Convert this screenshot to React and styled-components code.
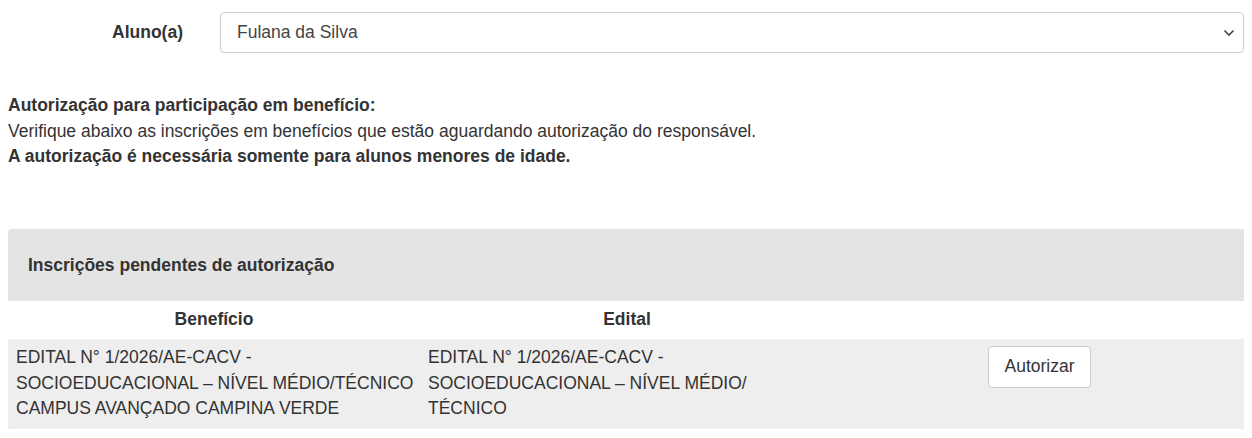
import styled, { createGlobalStyle } from "styled-components";

const GlobalStyle = createGlobalStyle`
  body {
    margin: 8px;
    background: #fff;
    color: #333;
    font-family: "Liberation Sans", Arial, sans-serif;
    font-size: 17.5px;
    line-height: 25.6px;
  }
`;

const FieldRow = styled.div`
  display: grid;
  grid-template-columns: 175px 1fr;
  column-gap: 37px;
  align-items: center;
  padding-top: 4px;
`;

const Label = styled.label`
  font-weight: bold;
  text-align: right;
`;

const SelectBox = styled.div`
  position: relative;
  height: 41px;
  border: 1px solid #ccc;
  border-radius: 4px;
  box-sizing: border-box;
  display: flex;
  align-items: center;
  padding: 0 16px;
  color: #444;
  background: #fff;
`;

const Chevron = styled.svg`
  position: absolute;
  right: 8px;
  top: 50%;
  margin-top: -4px;
`;

const Notice = styled.div`
  margin-top: 40px;
  p {
    margin: 0;
  }
  strong {
    font-weight: bold;
  }
`;

const Panel = styled.section`
  margin-top: 59px;
  margin-right: -1px;
  border-radius: 4px;
  overflow: hidden;
  box-shadow: 0 1px 2px rgba(0, 0, 0, 0.18);
`;

const PanelHeading = styled.h3`
  margin: 0;
  background: #e4e4e4;
  font-size: 17.5px;
  font-weight: bold;
  padding: 24px 20px 23px;
  line-height: 25.6px;
`;

const Table = styled.table`
  width: 100%;
  border-collapse: collapse;
  table-layout: fixed;
`;

const Th = styled.th`
  box-sizing: border-box;
  background: #fff;
  font-weight: bold;
  text-align: center;
  padding: 6px 8px;
  width: ${(p) => p.$width || "auto"};
`;

const Td = styled.td`
  background: #eee;
  vertical-align: top;
  text-align: ${(p) => (p.$center ? "center" : "left")};
  padding: 6px ${(p) => p.$padRight || "2px"} 7px 8px;
`;

const Button = styled.button`
  font-family: inherit;
  font-size: 17.5px;
  color: #333;
  background: #fff;
  border: 1px solid #ccc;
  border-radius: 4px;
  padding: 7px 15px;
  line-height: 25.6px;
  margin-top: 1px;
  cursor: pointer;
`;

export default function App() {
  return (
    <>
      <GlobalStyle />
      <FieldRow>
        <Label>Aluno(a)</Label>
        <SelectBox>
          Fulana da Silva
          <Chevron width="12" height="8" viewBox="0 0 12 8">
            <path d="M1.5 1.5 L6 6 L10.5 1.5" fill="none" stroke="#444" strokeWidth="1.6" />
          </Chevron>
        </SelectBox>
      </FieldRow>

      <Notice>
        <p>
          <strong>Autorização para participação em benefício:</strong>
        </p>
        <p>Verifique abaixo as inscrições em benefícios que estão aguardando autorização do responsável.</p>
        <p>
          <strong>A autorização é necessária somente para alunos menores de idade.</strong>
        </p>
      </Notice>

      <Panel>
        <PanelHeading>Inscrições pendentes de autorização</PanelHeading>
        <Table>
          <thead>
            <tr>
              <Th $width="412px">Benefício</Th>
              <Th $width="414px">Edital</Th>
              <Th />
            </tr>
          </thead>
          <tbody>
            <tr>
              <Td>EDITAL N° 1/2026/AE-CACV - SOCIOEDUCACIONAL – NÍVEL MÉDIO/TÉCNICO CAMPUS AVANÇADO CAMPINA VERDE</Td>
              <Td $padRight="24px">
                EDITAL N° 1/2026/AE-CACV - SOCIOEDUCACIONAL – NÍVEL MÉDIO/<wbr />TÉCNICO
              </Td>
              <Td $center $padRight="8px">
                <Button>Autorizar</Button>
              </Td>
            </tr>
          </tbody>
        </Table>
      </Panel>
    </>
  );
}
